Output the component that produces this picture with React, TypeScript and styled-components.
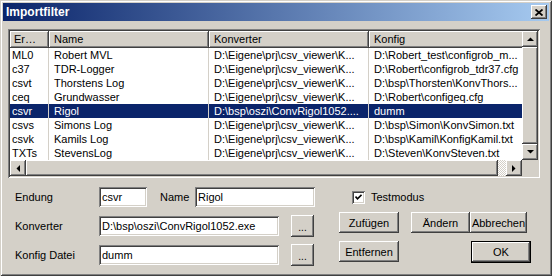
import React from 'react';
import styled, { createGlobalStyle } from 'styled-components';

const face = '#D4D0C8';

const GlobalStyle = createGlobalStyle`
  html, body {
    margin: 0;
    padding: 0;
    background: ${face};
  }
  body {
    font-family: 'Liberation Sans', Arial, sans-serif;
    font-size: 11px;
    color: #000;
  }
`;

const raised = `
  box-shadow: inset -1px -1px #404040, inset 1px 1px #fff,
    inset -2px -2px #808080, inset 2px 2px ${face};
`;

const sunken = `
  box-shadow: inset 1px 1px #808080, inset -1px -1px #fff,
    inset 2px 2px #404040, inset -2px -2px ${face};
`;

const columns = [39, 160, 160, 160];

const rows = [
  ['ML0', 'Robert MVL', 'D:\\Eigene\\prj\\csv_viewer\\K...', 'D:\\Robert_test\\configrob_m...'],
  ['c37', 'TDR-Logger', 'D:\\Eigene\\prj\\csv_viewer\\K...', 'D:\\Robert\\configrob_tdr37.cfg'],
  ['csvt', 'Thorstens Log', 'D:\\Eigene\\prj\\csv_viewer\\K...', 'D:\\bsp\\Thorsten\\KonvThors...'],
  ['ceq', 'Grundwasser', 'D:\\Eigene\\prj\\csv_viewer\\K...', 'D:\\Robert\\configeq.cfg'],
  ['csvr', 'Rigol', 'D:\\bsp\\oszi\\ConvRigol1052....', 'dumm'],
  ['csvs', 'Simons Log', 'D:\\Eigene\\prj\\csv_viewer\\K...', 'D:\\bsp\\Simon\\KonvSimon.txt'],
  ['csvk', 'Kamils Log', 'D:\\Eigene\\prj\\csv_viewer\\K...', 'D:\\bsp\\Kamil\\KonfigKamil.txt'],
  ['TXTs', 'StevensLog', 'D:\\Eigene\\prj\\csv_viewer\\K...', 'D:\\Steven\\KonvSteven.txt'],
];

const selectedRow = 4;

function Arrow({ dir }: { dir: 'up' | 'down' | 'left' | 'right' }) {
  const pts = {
    up: '0,4 7,4 3.5,0.5',
    down: '0,0 7,0 3.5,3.5',
    left: '4,0 4,7 0.5,3.5',
    right: '0,0 0,7 3.5,3.5',
  }[dir];
  const vertical = dir === 'up' || dir === 'down';
  return (
    <svg width={vertical ? 7 : 4} height={vertical ? 4 : 7} viewBox={vertical ? '0 0 7 4' : '0 0 4 7'}>
      <polygon points={pts} fill="#000" />
    </svg>
  );
}

export default function App() {
  return (
    <>
      <GlobalStyle />
      <Window>
        <TitleBar>
          <Title>Importfilter</Title>
          <CloseButton>
            <svg width="8" height="7" viewBox="0 0 8 7">
              <path d="M0.5 0.5 L7.5 6.5 M7.5 0.5 L0.5 6.5" stroke="#000" strokeWidth="1.8" />
            </svg>
          </CloseButton>
        </TitleBar>
        <Body>
          <ListView>
            <ListMain>
              <HeaderRow>
                {['Er…', 'Name', 'Konverter', 'Konfig'].map((h, i) => (
                  <HeaderCell key={h} $w={columns[i]} $first={i === 0}>
                    {h}
                  </HeaderCell>
                ))}
              </HeaderRow>
              {rows.map((r, ri) => (
                <Row key={r[0]} $selected={ri === selectedRow}>
                  {r.map((c, ci) => (
                    <Cell key={ci} $w={columns[ci]} $first={ci === 0} $selected={ri === selectedRow}>
                      {c}
                    </Cell>
                  ))}
                </Row>
              ))}
            </ListMain>
            <VScroll>
              <ScrollButton>
                <Arrow dir="up" />
              </ScrollButton>
              <Thumb />
              <ScrollButton>
                <Arrow dir="down" />
              </ScrollButton>
            </VScroll>
            <HScroll>
              <ScrollButton>
                <Arrow dir="left" />
              </ScrollButton>
              <HThumb />
              <Track />
              <ScrollButton>
                <Arrow dir="right" />
              </ScrollButton>
            </HScroll>
            <Corner />
          </ListView>

          <Form>
            <Fields>
              <FieldRow>
                <Label>Endung</Label>
                <TextBox $w={48}>csvr</TextBox>
                <InlineLabel>Name</InlineLabel>
                <TextBox $w={120}>Rigol</TextBox>
              </FieldRow>
              <FieldRow>
                <Label>Konverter</Label>
                <TextBox $w={180}>D:\bsp\oszi\ConvRigol1052.exe</TextBox>
                <BrowseButton>...</BrowseButton>
              </FieldRow>
              <FieldRow>
                <Label>Konfig Datei</Label>
                <TextBox $w={180}>dumm</TextBox>
                <BrowseButton>...</BrowseButton>
              </FieldRow>
            </Fields>

            <Actions>
              <CheckRow>
                <CheckBox>
                  <svg width="7" height="7" viewBox="0 0 7 7">
                    <path d="M0.5 2.5 L2.5 4.8 L6.5 0.8" stroke="#000" strokeWidth="1.6" fill="none" />
                  </svg>
                </CheckBox>
                <span>Testmodus</span>
              </CheckRow>
              <ButtonRow>
                <Button $w={60}>Zufügen</Button>
                <Button $w={59} $gap={12}>Ändern</Button>
                <Button $w={57}>Abbrechen</Button>
              </ButtonRow>
              <ButtonRow $top={8}>
                <Button $w={60}>Entfernen</Button>
                <DefaultButton $w={60} $gap={72}>OK</DefaultButton>
              </ButtonRow>
            </Actions>
          </Form>
        </Body>
      </Window>
    </>
  );
}

const Window = styled.div`
  width: 552px;
  height: 276px;
  box-sizing: border-box;
  padding: 3px;
  background: ${face};
  box-shadow: inset 1px 1px ${face}, inset -1px -1px #404040,
    inset 2px 2px #fff, inset -2px -2px #808080;
  display: flex;
  flex-direction: column;
`;

const TitleBar = styled.div`
  height: 18px;
  display: flex;
  align-items: center;
  justify-content: space-between;
  padding: 0 2px 0 3px;
  background: linear-gradient(to right, #0a246a, #a6caf0);
`;

const Title = styled.div`
  color: #fff;
  font-weight: bold;
  font-size: 12px;
`;

const CloseButton = styled.div`
  width: 16px;
  height: 14px;
  background: ${face};
  ${raised}
  display: flex;
  align-items: center;
  justify-content: center;
`;

const Body = styled.div`
  padding: 8px 9px 0 5px;
  display: flex;
  flex-direction: column;
`;

const ListView = styled.div`
  width: 532px;
  height: 149px;
  box-sizing: border-box;
  padding: 2px;
  background: #fff;
  ${sunken}
  display: grid;
  grid-template-columns: 1fr 16px;
  grid-template-rows: 1fr 16px;
`;

const ListMain = styled.div`
  overflow: hidden;
  display: flex;
  flex-direction: column;
`;

const HeaderRow = styled.div`
  display: flex;
  height: 17px;
  flex: none;
`;

const HeaderCell = styled.div<{ $w: number; $first?: boolean }>`
  flex: none;
  width: ${(p) => p.$w}px;
  box-sizing: border-box;
  padding-left: ${(p) => (p.$first ? 4 : 5)}px;
  line-height: 17px;
  background: ${face};
  box-shadow: inset -1px -1px #404040, inset 1px 1px #fff, inset -2px -2px #808080;
  white-space: nowrap;
  overflow: hidden;
`;

const Row = styled.div<{ $selected?: boolean }>`
  display: flex;
  height: 14px;
  flex: none;
  background: ${(p) => (p.$selected ? '#0a246a' : '#fff')};
`;

const Cell = styled.div<{ $w: number; $first?: boolean; $selected?: boolean }>`
  flex: none;
  width: ${(p) => p.$w}px;
  box-sizing: border-box;
  padding-left: ${(p) => (p.$first ? 2 : 5)}px;
  line-height: 14px;
  border-right: 1px solid ${face};
  color: ${(p) => (p.$selected ? '#fff' : '#000')};
  white-space: nowrap;
  overflow: hidden;
`;

const VScroll = styled.div`
  display: flex;
  flex-direction: column;
  background: ${face};
`;

const HScroll = styled.div`
  display: flex;
  background: ${face};
`;

const ScrollButton = styled.div`
  flex: none;
  width: 16px;
  height: 16px;
  background: ${face};
  ${raised}
  display: flex;
  align-items: center;
  justify-content: center;
`;

const Thumb = styled.div`
  flex: 1;
  background: ${face};
  ${raised}
`;

const HThumb = styled.div`
  flex: none;
  width: 472px;
  background: ${face};
  ${raised}
`;

const Track = styled.div`
  flex: 1;
  background: repeating-conic-gradient(#fff 0 25%, ${face} 0 50%) 0 0 / 2px 2px;
`;

const Corner = styled.div`
  background: ${face};
`;

const Form = styled.div`
  display: flex;
  margin-top: 8px;
  padding-left: 7px;
`;

const Fields = styled.div`
  display: flex;
  flex-direction: column;
  gap: 7px;
  width: 324px;
`;

const FieldRow = styled.div`
  display: flex;
  align-items: center;
  height: 22px;
`;

const Label = styled.div`
  width: 84px;
  flex: none;
`;

const InlineLabel = styled.div`
  width: 35px;
  margin-left: 13px;
  flex: none;
`;

const TextBox = styled.div<{ $w: number }>`
  width: ${(p) => p.$w}px;
  height: 20px;
  box-sizing: border-box;
  padding: 0 3px;
  line-height: 20px;
  background: #fff;
  ${sunken}
  white-space: nowrap;
  overflow: hidden;
`;

const BrowseButton = styled.div`
  width: 23px;
  height: 22px;
  margin-left: 12px;
  box-sizing: border-box;
  background: ${face};
  ${raised}
  display: flex;
  align-items: center;
  justify-content: center;
  padding-top: 3px;
  font-size: 10px;
`;

const Actions = styled.div`
  display: flex;
  flex-direction: column;
`;

const CheckRow = styled.div`
  height: 22px;
  display: flex;
  align-items: center;
  gap: 6px;
  padding-left: 13px;
`;

const CheckBox = styled.div`
  width: 13px;
  height: 13px;
  box-sizing: border-box;
  background: #fff;
  ${sunken}
  display: flex;
  align-items: center;
  justify-content: center;
`;

const ButtonRow = styled.div<{ $top?: number }>`
  display: flex;
  margin-top: ${(p) => p.$top ?? 4}px;
`;

const Button = styled.div<{ $w: number; $gap?: number }>`
  width: ${(p) => p.$w}px;
  height: 21px;
  margin-left: ${(p) => p.$gap ?? 0}px;
  box-sizing: border-box;
  background: ${face};
  ${raised}
  display: flex;
  align-items: center;
  justify-content: center;
  white-space: nowrap;
`;

const DefaultButton = styled(Button)`
  height: 22px;
  border: 1px solid #000;
`;
